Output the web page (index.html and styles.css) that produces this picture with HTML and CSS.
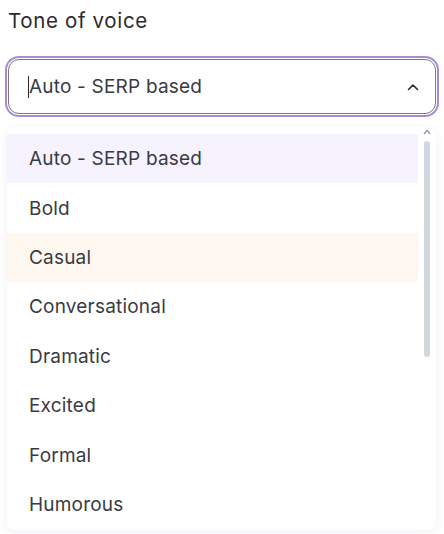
FILE: index.html
```html
<!DOCTYPE html>
<html>
<head>
<meta charset="utf-8">
<link rel="stylesheet" href="styles.css">
</head>
<body>
<div class="page">
  <div class="title">Tone of voice</div>
  <div class="select">
    <span class="caret"></span><span class="value">Auto - SERP based</span>
    <svg class="chev" width="12" height="8" viewBox="0 0 12 8"><path d="M1.5 6.5 L6 2 L10.5 6.5" fill="none" stroke="#2a2a2a" stroke-width="1.6" stroke-linecap="round" stroke-linejoin="round"/></svg>
  </div>
  <div class="panel">
    <ul class="list">
      <li class="opt selected">Auto - SERP based</li>
      <li class="opt">Bold</li>
      <li class="opt hover">Casual</li>
      <li class="opt">Conversational</li>
      <li class="opt">Dramatic</li>
      <li class="opt">Excited</li>
      <li class="opt">Formal</li>
      <li class="opt">Humorous</li>
    </ul>
    <div class="scroll">
      <svg class="arrow" width="8" height="6" viewBox="0 0 8 6"><path d="M1 5 L4 1.5 L7 5" fill="none" stroke="#9a9ea6" stroke-width="1.6"/></svg>
      <div class="thumb"></div>
    </div>
  </div>
</div>
</body>
</html>
```

FILE: styles.css
```css
html, body {
  margin: 0;
  padding: 0;
  background: #ffffff;
  font-family: Inter, "Noto Sans", sans-serif;
}
.page {
  padding: 8px 8px 0 8px;
  height: 534px;
  box-sizing: border-box;
  overflow: hidden;
  position: relative;
}
.page::after {
  content: "";
  position: absolute;
  right: 6px;
  top: 120px;
  bottom: 0;
  width: 1px;
  background: #f0f0f2;
  z-index: -1;
}
.title {
  font-size: 20.5px;
  line-height: 26px;
  letter-spacing: 0.65px;
  color: #2b2b2e;
}
.select {
  margin-top: 25px;
  height: 55px;
  box-sizing: border-box;
  border: 1px solid #7b7b80;
  border-radius: 11px;
  box-shadow: 0 0 0 1px #ffffff, 0 0 0 3px #a98bd5;
  display: flex;
  align-items: center;
  padding: 0 16px 0 19px;
  background: #fff;
}
.caret {
  width: 1px;
  height: 22px;
  background: #2b2b2e;
}
.value {
  flex: 1;
  font-size: 19px;
  letter-spacing: 0.2px;
  color: #3a3a42;
}
.chev {
  display: block;
}
.panel {
  margin: 13px 0 0 -1px;
  height: 403px;
  background: #fff;
  border-radius: 8px;
  box-shadow: 0 2px 10px rgba(40, 30, 80, 0.07);
  display: flex;
  overflow: hidden;
}
.list {
  list-style: none;
  margin: 0;
  padding: 7px 0 0 0;
  flex: 1;
}
.opt {
  height: 49.4px;
  display: flex;
  align-items: center;
  padding-left: 22px;
  font-size: 19px;
  letter-spacing: 0.2px;
  color: #3a3a44;
}
.opt.selected {
  background: #f6f3fe;
}
.opt.hover {
  background: #fff8f1;
}
.scroll {
  width: 18px;
  display: flex;
  flex-direction: column;
  align-items: center;
  padding-top: 2px;
}
.arrow {
  display: block;
}
.thumb {
  margin-top: 6px;
  width: 6px;
  height: 216px;
  border-radius: 3px;
  background: #d3d8e0;
}
```
